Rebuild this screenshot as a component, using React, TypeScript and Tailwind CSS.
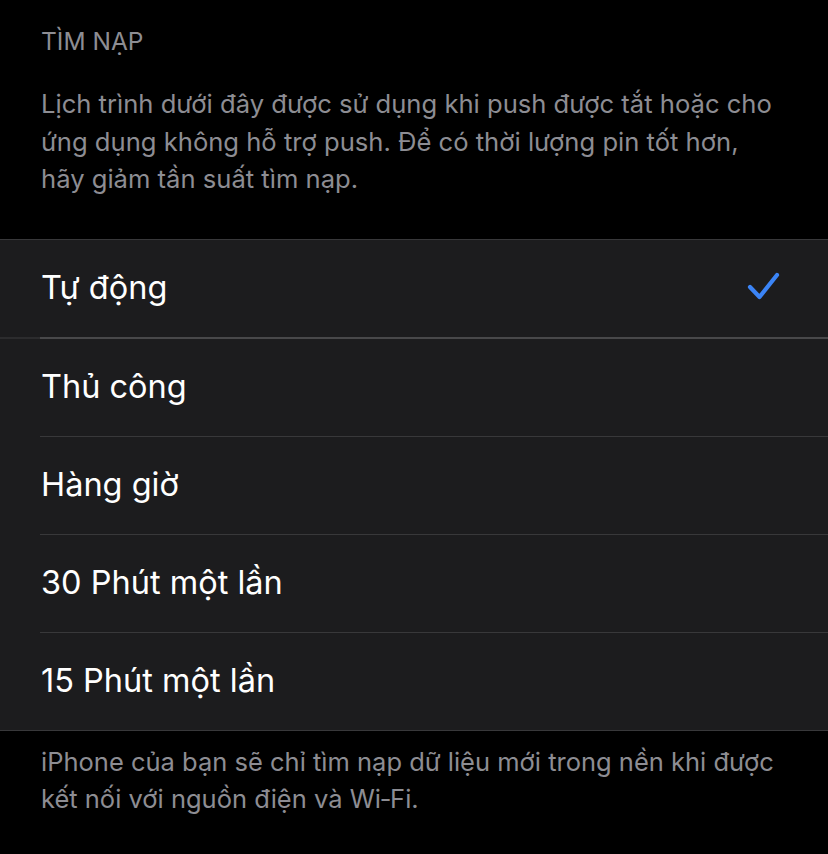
const options = [
  "Tự động",
  "Thủ công",
  "Hàng giờ",
  "30 Phút một lần",
  "15 Phút một lần",
];

const font = { fontFamily: "Inter, 'Noto Sans', sans-serif" };

function Check() {
  return (
    <svg width="34" height="32" viewBox="0 0 34 32" fill="none">
      <path
        d="M4 15 L13.5 25 L31 3"
        stroke="#3b84f6"
        strokeWidth="4.2"
        strokeLinecap="round"
        strokeLinejoin="round"
      />
    </svg>
  );
}

export default function App() {
  const selected = 0;

  return (
    <div className="min-h-[854px] w-[828px] bg-black text-white" style={font}>
      {/* Tiêu đề + mô tả */}
      <div className="px-[41px] pt-[25px]">
        <div className="text-[24.5px] leading-[32px] text-[#8d8d93]">TÌM NẠP</div>
        <p className="mt-[28px] text-[25.6px] leading-[37.5px] text-[#8d8d93]">
          Lịch trình dưới đây được sử dụng khi push được tắt hoặc cho ứng dụng không hỗ trợ push. Để có
          thời lượng pin tốt hơn, hãy giảm tần suất tìm nạp.
        </p>
      </div>

      {/* Danh sách lựa chọn */}
      <div className="mt-[41px] border-y border-[#38383a] bg-[#1c1c1e]">
        {options.map((label, i) => (
          <div key={label}>
            <div className="flex h-[97px] items-center justify-between pl-[41px] pr-[48px]">
              <span className="text-[32.5px]">{label}</span>
              {i === selected && <Check />}
            </div>
            {i === 0 && (
              <div className="flex h-[2px]">
                <div className="w-[40px] bg-[#2c2c2e]" />
                <div className="flex-1 bg-[#48484a]" />
              </div>
            )}
            {i > 0 && i < options.length - 1 && (
              <div className="ml-[40px] h-px bg-[#38383a]" />
            )}
          </div>
        ))}
      </div>

      {/* Ghi chú */}
      <p className="px-[41px] pt-[12px] text-[25.5px] leading-[37px] text-[#8d8d93]">
        iPhone của bạn sẽ chỉ tìm nạp dữ liệu mới trong nền khi được kết nối với nguồn điện và
        Wi‑Fi.
      </p>
    </div>
  );
}
